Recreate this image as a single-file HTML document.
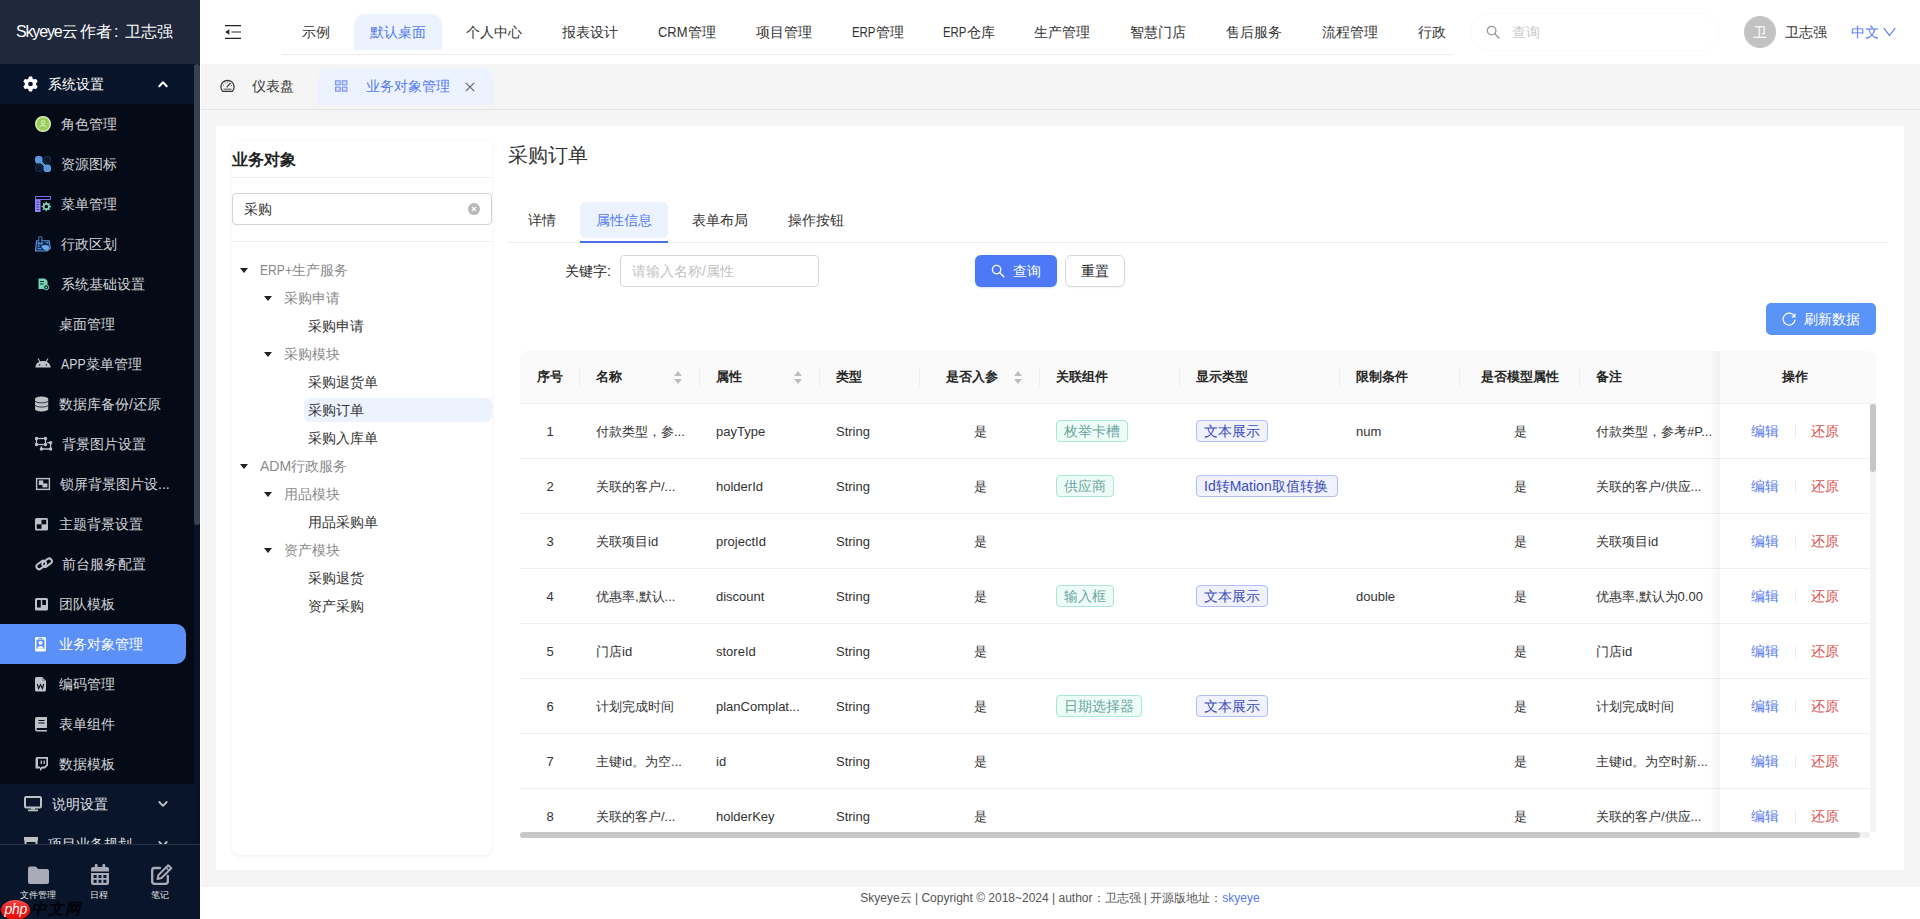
<!DOCTYPE html>
<html lang="zh">
<head>
<meta charset="utf-8">
<title>Skyeye</title>
<style>
*{box-sizing:border-box;margin:0;padding:0}
html,body{width:1920px;height:919px;overflow:hidden;background:#f5f5f5;font-family:"Liberation Sans",sans-serif;font-size:14px;color:#333}
.a{position:absolute}
.t{position:absolute;white-space:nowrap;line-height:20px;height:20px}
svg{position:absolute;display:block}
/* sidebar */
#side{left:0;top:0;width:200px;height:919px;background:#050a17;overflow:hidden}
#logo{left:0;top:0;width:200px;height:64px;background:#20293c}
#logo .t{left:16px;top:21px;font-size:16px;color:#fff;line-height:22px;height:22px}
#grp1{left:0;top:64px;width:194px;height:40px;background:#07142a}
.mi{position:absolute;left:0;width:194px;height:40px}
.mi .t{top:10px;color:#d2d4d8;font-size:14px}
.mi svg{top:12px;left:35px;width:16px;height:16px}
#act{left:0;top:624px;width:186px;height:40px;background:#5c90f9;border-radius:0 10px 10px 0}
#grp2{left:0;top:784px;width:200px;height:61px;background:#08152a}
#sbar{left:0;top:844px;width:200px;height:75px;background:#08152a;border-top:1px solid #2a3447}
#sbar .t{font-size:9.200px;color:#e6e6e6;line-height:12px;height:12px;top:44px}
/* header */
#hdr{left:200px;top:0;width:1720px;height:64px;background:#fff}
.nv{position:absolute;top:22px;font-size:14px;line-height:20px;color:#333;white-space:nowrap}
#tabs{left:200px;top:64px;width:1720px;height:46px;background:#f5f5f5;border-bottom:1px solid #e4e4e4}
#card{left:216px;top:126px;width:1688px;height:744px;background:#fff}
#foot{left:200px;top:887px;width:1720px;height:32px;background:#fff}
</style>
</head>
<body>
<!-- ============ SIDEBAR ============ -->
<div id="side" class="a">
  <div id="logo" class="a"><div class="t"><span style="letter-spacing:-1.150px">Skyeye</span><span>云</span><span style="margin-left:2.500px">作者</span><span style="display:inline-block;width:13px;padding-left:2px">:</span>卫志强</div></div>
  <div id="grp1" class="a"></div>
  <!-- group 1 header -->
  <svg style="left:23px;top:76px;width:15px;height:16px" viewBox="0 0 512 512"><path fill="#fff" d="M495.9 166.600c3.200 8.700 .500 18.400-6.400 24.600l-43.300 39.400c1.100 8.300 1.700 16.800 1.700 25.400s-.600 17.100-1.700 25.400l43.300 39.400c6.900 6.200 9.600 15.900 6.400 24.600c-4.400 11.900-9.700 23.300-15.800 34.300l-4.700 8.100c-6.600 11-14 21.400-22.100 31.200c-5.900 7.200-15.700 9.600-24.500 6.800l-55.700-17.700c-13.400 10.300-28.200 18.900-44 25.400l-12.500 57.100c-2 9.100-9 16.300-18.200 17.800c-13.800 2.300-28 3.500-42.500 3.500s-28.700-1.200-42.500-3.500c-9.200-1.500-16.200-8.700-18.200-17.800l-12.500-57.100c-15.800-6.500-30.600-15.100-44-25.400L83.100 425.900c-8.800 2.800-18.600 .300-24.500-6.800c-8.100-9.800-15.500-20.200-22.100-31.200l-4.700-8.100c-6.100-11-11.400-22.400-15.800-34.300c-3.200-8.700-.500-18.400 6.400-24.600l43.300-39.400C64.600 273.100 64 264.600 64 256s.600-17.100 1.700-25.400L22.400 191.200c-6.900-6.200-9.600-15.900-6.400-24.600c4.400-11.900 9.700-23.300 15.800-34.300l4.700-8.100c6.600-11 14-21.400 22.100-31.200c5.900-7.200 15.700-9.600 24.500-6.800l55.700 17.700c13.400-10.300 28.200-18.900 44-25.400l12.500-57.100c2-9.100 9-16.300 18.200-17.800C227.300 1.200 241.500 0 256 0s28.700 1.200 42.500 3.500c9.200 1.500 16.200 8.700 18.200 17.800l12.500 57.100c15.800 6.500 30.600 15.100 44 25.400l55.700-17.700c8.800-2.800 18.600-.300 24.500 6.800c8.100 9.800 15.500 20.200 22.100 31.200l4.700 8.100c6.100 11 11.400 22.400 15.800 34.300zM256 336a80 80 0 1 0 0-160 80 80 0 1 0 0 160z"/></svg>
  <div class="t" style="left:48px;top:74px;color:#fff;font-size:14px">系统设置</div>
  <svg style="left:158px;top:80px;width:10px;height:8px" viewBox="0 0 10 8"><path d="M1.300 6.200 L5 2.300 L8.700 6.200" fill="none" stroke="#fff" stroke-width="2" stroke-linecap="round" stroke-linejoin="round"/></svg>

  <div id="act" class="a"></div>

  <!-- 角色管理 -->
  <div class="mi" style="top:104px">
    <svg viewBox="0 0 16 16"><circle cx="8" cy="8" r="7.300" fill="#9ccc5a" stroke="#dcf0bd" stroke-width="1.400"/><circle cx="8" cy="6.300" r="1.700" fill="none" stroke="#e8f7cf" stroke-width="0.900"/><path d="M4.500 11.300 C5 8.800 11 8.800 11.500 11.300" fill="none" stroke="#e8f7cf" stroke-width="0.900"/></svg>
    <div class="t" style="left:61px">角色管理</div></div>
  <!-- 资源图标 -->
  <div class="mi" style="top:144px">
    <svg viewBox="0 0 16 16"><rect x="0" y="0" width="7.500" height="7.500" rx="2.800" fill="#5a98de"/><rect x="8.500" y="8.500" width="7.500" height="7.500" rx="2.800" fill="#5a98de"/><rect x="9" y="0.500" width="6.500" height="6.500" rx="1.800" fill="#0c1830" stroke="#1d2c4a" stroke-width="1"/><rect x="0.500" y="9" width="6.500" height="6.500" rx="1.800" fill="#0c1830" stroke="#1d2c4a" stroke-width="1"/><path d="M5 5 L11 11" stroke="#5a98de" stroke-width="2.200"/></svg>
    <div class="t" style="left:61px">资源图标</div></div>
  <!-- 菜单管理 -->
  <div class="mi" style="top:184px">
    <svg viewBox="0 0 16 16"><path d="M0.500 0.500 H15.500 V3.500 H0.500 Z" fill="none" stroke="#7b6cf0" stroke-width="1"/><rect x="0" y="3.500" width="5.500" height="12.500" fill="#8f86f5"/><path d="M1.500 6 H4 M1.500 8.500 H4 M1.500 11 H4 M1.500 13.500 H4" stroke="#4338a8" stroke-width="1"/><circle cx="11.300" cy="10.500" r="2.700" fill="none" stroke="#86dcbc" stroke-width="1.700"/><path d="M11.300 5.700 V7 M11.300 14 V15.300 M6.500 10.500 H7.800 M14.800 10.500 H16 M8 7.200 L8.900 8.100 M13.700 12.900 L14.600 13.800 M8 13.800 L8.900 12.900 M13.700 8.100 L14.600 7.200" stroke="#86dcbc" stroke-width="1.300"/></svg>
    <div class="t" style="left:61px">菜单管理</div></div>
  <!-- 行政区划 -->
  <div class="mi" style="top:224px">
    <svg viewBox="0 0 17 17" preserveAspectRatio="none" style="width:16.500px;height:16px;top:11.800px"><path d="M1.600 5 H14.600 L15.800 13 L12.300 16 H0.600 Z" fill="#12284a" stroke="#5d97e0" stroke-width="1.200" stroke-linejoin="round"/><path d="M2.800 6.500 H8 V9 H2.800 Z M10 6.300 L13.500 6.300 L14 9 Z M2.500 12.700 H7 V14 H2.500 Z" fill="#4d86d2"/><circle cx="3.900" cy="10.800" r="1.100" fill="#4d86d2"/><path d="M6.300 11 Q10 8.300 14.200 10.600 L14.700 13 L12 15.700 L9 14.300 Z" fill="#6fa9f0"/><path d="M8.500 6 L14.500 10" stroke="#12284a" stroke-width="0.800"/><circle cx="5.500" cy="2.600" r="2" fill="#0b1930" stroke="#4a80c8" stroke-width="1"/><path d="M5.500 2 V6.500" stroke="#0b1930" stroke-width="1.300"/><path d="M4.700 4.300 H6.300 V7.200 H4.700 Z" fill="#0b1930"/></svg>
    <div class="t" style="left:61px">行政区划</div></div>
  <!-- 系统基础设置 -->
  <div class="mi" style="top:264px">
    <svg viewBox="0 0 16 16"><path d="M3.500 2.500 H10 L12.500 5 V13 H3.500 Z" fill="#7ad5b7"/><path d="M5 5.500 H9 M5 8 H8.500" stroke="#0c2a24" stroke-width="1.200"/><circle cx="11.200" cy="11.300" r="2.500" fill="#0c2a24" stroke="#7ad5b7" stroke-width="1"/><circle cx="11.200" cy="11.300" r="0.900" fill="#7ad5b7"/></svg>
    <div class="t" style="left:61px">系统基础设置</div></div>
  <!-- 桌面管理 -->
  <div class="mi" style="top:304px"><div class="t" style="left:59px">桌面管理</div></div>
  <!-- APP菜单管理 : android -->
  <div class="mi" style="top:344px">
    <svg viewBox="0 0 16 16" style="top:11px"><path d="M0.300 12.500 C0.600 8.600 3.800 6 8 6 C12.200 6 15.400 8.600 15.700 12.500 Z" fill="#bec1c8"/><path d="M3.300 4 L5 7 M12.700 4 L11 7" stroke="#bec1c8" stroke-width="1.100" stroke-linecap="round"/><circle cx="4.600" cy="10" r="0.800" fill="#050a17"/><circle cx="11.400" cy="10" r="0.800" fill="#050a17"/></svg>
    <div class="t" style="left:61px"><span style="display:inline-block;transform:scaleX(0.879);transform-origin:0 50%;margin-right:-3.4px">APP</span>菜单管理</div></div>
  <!-- 数据库备份/还原 -->
  <div class="mi" style="top:384px">
    <svg viewBox="0 0 14 16" style="width:14px"><path d="M0 3.300 C0 -0.300 13.200 -0.300 13.200 3.300 V12.700 C13.200 16.300 0 16.300 0 12.700 Z" fill="#bec1c8"/><path d="M0 5.200 C2 7.400 11.200 7.400 13.200 5.200 M0 9.400 C2 11.600 11.200 11.600 13.200 9.400" fill="none" stroke="#1a2030" stroke-width="0.900"/></svg>
    <div class="t" style="left:59px">数据库备份/还原</div></div>
  <!-- 背景图片设置 : object-ungroup -->
  <div class="mi" style="top:424px">
    <svg viewBox="0 0 18 16" style="width:18px"><g fill="none" stroke="#bec1c8" stroke-width="1.300"><rect x="1.500" y="2.500" width="9" height="6"/><path d="M12.300 6.700 H15.600 V13 H6.400 V10.300"/></g><g fill="#bec1c8"><circle cx="1.600" cy="2.500" r="1.700"/><circle cx="10.500" cy="2.500" r="1.700"/><circle cx="1.600" cy="8.500" r="1.700"/><circle cx="10.500" cy="8.500" r="1.700"/><circle cx="15.600" cy="6.700" r="1.700"/><circle cx="15.600" cy="13" r="1.700"/><circle cx="6.400" cy="13" r="1.700"/></g></svg>
    <div class="t" style="left:62px">背景图片设置</div></div>
  <!-- 锁屏背景图片设 : image -->
  <div class="mi" style="top:464px">
    <svg viewBox="0 0 16 16"><rect x="1.600" y="2.600" width="12.800" height="10.800" fill="none" stroke="#bec1c8" stroke-width="1.400"/><rect x="3.800" y="4.400" width="4.400" height="4.600" fill="#bec1c8"/><rect x="7.400" y="7.400" width="5" height="4" fill="#bec1c8"/></svg>
    <div class="t" style="left:60px">锁屏背景图片设...</div></div>
  <!-- 主题背景设置 : chess board -->
  <div class="mi" style="top:504px">
    <svg viewBox="0 0 14 16" style="width:14px"><rect x="0" y="2" width="13" height="12.500" rx="1.500" fill="#bec1c8"/><rect x="6.500" y="3.800" width="4.800" height="4.500" fill="#050a17"/><rect x="1.700" y="8.300" width="4.800" height="4.500" fill="#050a17"/></svg>
    <div class="t" style="left:59px">主题背景设置</div></div>
  <!-- 前台服务配置 : link -->
  <div class="mi" style="top:544px">
    <svg viewBox="0 0 18 16" style="width:18px"><g fill="none" stroke="#bec1c8" stroke-width="2"><rect x="-5.200" y="-2.700" width="10.400" height="5.400" rx="2.700" transform="translate(6.200 9) rotate(-36)"/><rect x="-5.200" y="-2.700" width="10.400" height="5.400" rx="2.700" transform="translate(12.100 6.700) rotate(-36)"/></g></svg>
    <div class="t" style="left:62px">前台服务配置</div></div>
  <!-- 团队模板 : trello -->
  <div class="mi" style="top:584px">
    <svg viewBox="0 0 14 16" style="width:14px"><rect x="0" y="2" width="13" height="12.500" rx="1.500" fill="#bec1c8"/><rect x="2" y="4" width="3.800" height="7.500" rx="0.500" fill="#050a17"/><rect x="7.200" y="4" width="3.800" height="5" rx="0.500" fill="#050a17"/></svg>
    <div class="t" style="left:59px">团队模板</div></div>
  <!-- 业务对象管理 : id badge (active) -->
  <div class="mi" style="top:624px">
    <svg viewBox="0 0 12 16" style="width:12px"><rect x="0" y="1" width="11" height="14.500" rx="1.500" fill="#fff"/><rect x="1.500" y="3.500" width="8" height="10.500" fill="#5c90f9"/><rect x="3.500" y="1.800" width="4" height="1" fill="#5c90f9"/><circle cx="5.500" cy="6.800" r="1.900" fill="#fff"/><path d="M2.500 12.500 C2.500 9 8.500 9 8.500 12.500 Z" fill="#fff"/><rect x="1.500" y="12.500" width="8" height="1.500" fill="#fff"/></svg>
    <div class="t" style="left:59px;color:#fff">业务对象管理</div></div>
  <!-- 编码管理 : file word -->
  <div class="mi" style="top:664px">
    <svg viewBox="0 0 12 16" style="width:12px"><path d="M0 2.500 Q0 1 1.500 1 H7 L11 5 V14 Q11 15.500 9.500 15.500 H1.500 Q0 15.500 0 14 Z" fill="#bec1c8"/><path d="M7 1 V5 H11" fill="#8e939c"/><path d="M2.300 8 L3.600 12.500 L5.500 8.800 L7.400 12.500 L8.700 8" fill="none" stroke="#050a17" stroke-width="1.100"/></svg>
    <div class="t" style="left:59px">编码管理</div></div>
  <!-- 表单组件 : book -->
  <div class="mi" style="top:704px">
    <svg viewBox="0 0 13 16" style="width:13px"><path d="M0 3 Q0 1 2 1 H12 V12 H2.500 Q1.500 12 1.500 13 Q1.500 14 2.500 14 H12 V15.500 H2 Q0 15.500 0 13.500 Z" fill="#bec1c8"/><path d="M3.500 4.500 H9.500 M3.500 7 H9.500" stroke="#050a17" stroke-width="1.100"/></svg>
    <div class="t" style="left:59px">表单组件</div></div>
  <!-- 数据模板 : twitch -->
  <div class="mi" style="top:744px">
    <svg viewBox="0 0 14 16" style="width:14px"><path d="M1.500 1 H13 V9.500 L10 12.500 H7.500 L5 15 V12.500 H0.500 V3 Z" fill="#bec1c8"/><path d="M3 2.800 H11.300 V8.800 L9.500 10.500 H6.800 L5 12 V10.500 H3 Z" fill="#050a17"/><path d="M6.300 4.500 V8 M9.200 4.500 V8" stroke="#bec1c8" stroke-width="1.300"/></svg>
    <div class="t" style="left:59px">数据模板</div></div>

  <!-- group 2 -->
  <div id="grp2" class="a"></div>
  <svg style="left:24px;top:796px;width:18px;height:16px" viewBox="0 0 18 16"><rect x="1" y="1" width="16" height="10.500" rx="1.200" fill="none" stroke="#bec1c8" stroke-width="2"/><rect x="4" y="13.500" width="10" height="1.800" rx="0.500" fill="#bec1c8"/><rect x="7" y="11.500" width="4" height="2" fill="#bec1c8"/></svg>
  <div class="t" style="left:52px;top:794px;color:#e0e2e6">说明设置</div>
  <svg style="left:158px;top:800px;width:10px;height:8px" viewBox="0 0 10 8"><path d="M1.300 2 L5 5.800 L8.700 2" fill="none" stroke="#bec1c8" stroke-width="1.800" stroke-linecap="round" stroke-linejoin="round"/></svg>
  <svg style="left:24px;top:837px;width:14px;height:16px" viewBox="0 0 14 16"><rect x="0" y="0" width="14" height="3.500" fill="#bec1c8"/><rect x="1.500" y="4" width="11" height="9" fill="none" stroke="#bec1c8" stroke-width="2"/></svg>
  <div class="t" style="left:48px;top:834px;color:#e0e2e6">项目业务规划</div>
  <svg style="left:158px;top:840px;width:10px;height:8px" viewBox="0 0 10 8"><path d="M1.300 2 L5 5.800 L8.700 2" fill="none" stroke="#bec1c8" stroke-width="1.800" stroke-linecap="round" stroke-linejoin="round"/></svg>

  <!-- scrollbar -->
  <div class="a" style="left:194px;top:64px;width:6px;height:780px;background:#081327"></div>
  <div class="a" style="left:194px;top:64px;width:6px;height:461px;background:#374152;border-radius:3px"></div>

  <!-- bottom bar -->
  <div id="sbar" class="a">
    <svg style="left:28px;top:21px;width:21px;height:18px" viewBox="0 0 21 18"><path d="M0 2.500 Q0 0.500 2 0.500 H7 Q8 0.500 8.800 1.500 L10 3 H19 Q21 3 21 5 V16 Q21 18 19 18 H2 Q0 18 0 16 Z" fill="#a9acb8"/></svg>
    <svg style="left:91px;top:19px;width:18px;height:21px" viewBox="0 0 18 21"><path d="M0 5 Q0 3 2 3 H16 Q18 3 18 5 V7.500 H0 Z" fill="#a9acb8"/><rect x="3.800" y="0" width="2.800" height="5" rx="1" fill="#a9acb8"/><rect x="11.400" y="0" width="2.800" height="5" rx="1" fill="#a9acb8"/><path d="M0 9 H18 V19 Q18 21 16 21 H2 Q0 21 0 19 Z" fill="#a9acb8"/><g fill="#08152a"><rect x="2.600" y="11" width="3" height="3"/><rect x="7.500" y="11" width="3" height="3"/><rect x="12.400" y="11" width="3" height="3"/><rect x="2.600" y="15.800" width="3" height="3"/><rect x="7.500" y="15.800" width="3" height="3"/><rect x="12.400" y="15.800" width="3" height="3"/></g></svg>
    <svg style="left:151px;top:19px;width:22px;height:21px" viewBox="0 0 22 21"><path d="M9 4 H3.500 Q1.200 4 1.200 6.300 V17.500 Q1.200 19.800 3.500 19.800 H14.500 Q16.800 19.800 16.800 17.500 V12" fill="none" stroke="#a9acb8" stroke-width="2.300" stroke-linecap="round"/><path d="M17.200 1.200 L20.300 4.300 L10.500 14 L6.500 15 L7.500 11 Z" fill="none" stroke="#a9acb8" stroke-width="2" stroke-linejoin="round"/><path d="M15 3.500 L18 6.500" stroke="#a9acb8" stroke-width="1.500"/></svg>
    <div class="t" style="left:20px">文件管理</div>
    <div class="t" style="left:90px">日程</div>
    <div class="t" style="left:151px">笔记</div>
  </div>

  <!-- watermark -->
  <div class="a" style="left:1px;top:900px;width:29px;height:20px;border-radius:50%;background:linear-gradient(#f45252,#f01414 45%,#ee0d0d)"></div>
  <div class="t" style="left:4.500px;top:900px;font-size:14px;font-style:italic;font-weight:normal;color:#fff;letter-spacing:-0.300px;line-height:18px;height:18px">php</div>
  <div class="t" style="left:31px;top:900px;font-size:15.500px;letter-spacing:0.800px;font-style:italic;color:#020308;line-height:18px;height:18px;font-weight:bold">中文网</div>
</div>
<!-- ============ HEADER ============ -->
<div id="hdr" class="a">
  <!-- coords relative to #hdr (left:200) -->
  <svg style="left:25px;top:25px;width:17px;height:14px" viewBox="0 0 17 14"><path d="M0 0.700 H16 M6.500 7 H16 M0 13.300 H16" stroke="#222" stroke-width="1.200" fill="none"/><path d="M4.300 4.200 L0.200 7 L4.300 9.800 Z" fill="#222"/></svg>
  <div class="a" style="left:154px;top:14px;width:88px;height:36px;background:#ecf3ff;border-radius:10px 10px 0 0"></div>
  <div class="a" style="left:82px;top:54px;width:1171px;height:1px;background:#ececec"></div>
  <div class="nv" style="left:102px">示例</div>
  <div class="nv" style="left:170px;color:#557af0">默认桌面</div>
  <div class="nv" style="left:266px">个人中心</div>
  <div class="nv" style="left:362px">报表设计</div>
  <div class="nv" style="left:458px"><span style="display:inline-block;transform:scaleX(0.925);transform-origin:0 50%;margin-right:-2.4px">CRM</span>管理</div>
  <div class="nv" style="left:556px">项目管理</div>
  <div class="nv" style="left:652px"><span style="display:inline-block;transform:scaleX(0.816);transform-origin:0 50%;margin-right:-5.3px">ERP</span>管理</div>
  <div class="nv" style="left:743px"><span style="display:inline-block;transform:scaleX(0.816);transform-origin:0 50%;margin-right:-5.3px">ERP</span>仓库</div>
  <div class="nv" style="left:834px">生产管理</div>
  <div class="nv" style="left:930px">智慧门店</div>
  <div class="nv" style="left:1026px">售后服务</div>
  <div class="nv" style="left:1122px">流程管理</div>
  <div class="nv" style="left:1218px">行政</div>
  <svg style="left:1286px;top:25px;width:14px;height:14px" viewBox="0 0 14 14"><circle cx="5.600" cy="5.600" r="4.300" fill="none" stroke="#999" stroke-width="1.300"/><path d="M8.800 8.800 L13 13" stroke="#999" stroke-width="1.400" stroke-linecap="round"/></svg>
  <div class="nv" style="left:1312px;color:#c8c8c8">查询</div>
  <div class="a" style="left:1270px;top:13px;width:249px;height:38px;border:1px solid #fbfbfb;border-radius:19px"></div>
  <div class="a" style="left:1544px;top:16px;width:32px;height:32px;border-radius:50%;background:#c2c2c2"></div>
  <div class="nv" style="left:1553px;color:#fff">卫</div>
  <div class="nv" style="left:1585px">卫志强</div>
  <div class="nv" style="left:1651px;color:#557af0">中文</div>
  <svg style="left:1683px;top:27px;width:13px;height:10px" viewBox="0 0 13 10"><path d="M0.800 1 L6.500 8.500 L12.200 1" fill="none" stroke="#557af0" stroke-width="1.200"/></svg>
</div>
<div id="tabs" class="a">
  <!-- coords relative to #tabs (left:200, top:64) -->
  <svg style="left:19.500px;top:14.700px;width:15px;height:13px" viewBox="0 0 15 13"><path d="M2.600 12.300 A6.600 6.600 0 1 1 12.400 12.300 Z" fill="none" stroke="#333" stroke-width="1.250" stroke-linejoin="round"/><path d="M7 7.800 L10.200 4.300" stroke="#333" stroke-width="1.200" stroke-linecap="round"/><path d="M3 6 L3.900 6.500 M5 3.500 L5.500 4.300 M7.500 2.500 V3.500 M12 6 L11.200 6.500" stroke="#333" stroke-width="0.900"/><path d="M3.500 10.200 H11.500" stroke="#333" stroke-width="0.900"/></svg>
  <div class="t" style="left:52px;top:12px;color:#333">仪表盘</div>
  <div class="a" style="left:118px;top:5px;width:176px;height:36px;background:#ecf3ff;border-radius:10px 10px 0 0"></div>
  <svg style="left:135px;top:16px;width:12.500px;height:12px" viewBox="0 0 13 12"><g fill="#d3dcfb" stroke="#7590f2" stroke-width="1.100"><rect x="0.600" y="0.600" width="4.800" height="4.200"/><rect x="7.600" y="0.600" width="4.800" height="4.200"/><rect x="0.600" y="7.200" width="4.800" height="4.200"/><rect x="7.600" y="7.200" width="4.800" height="4.200"/></g></svg>
  <div class="t" style="left:166px;top:12px;color:#557af0">业务对象管理</div>
  <svg style="left:265px;top:18px;width:10px;height:10px" viewBox="0 0 10 10"><path d="M0.800 0.800 L9.200 9.200 M9.200 0.800 L0.800 9.200" stroke="#666" stroke-width="1.200"/></svg>
</div>
<div id="card" class="a">
  <!-- coords relative to #card (left:216, top:126) -->
  <style>
  #lp{left:16px;top:15px;width:260px;height:714px;background:#fff;border-radius:8px;box-shadow:0 1px 4px rgba(0,0,0,.07)}
  .tr{position:absolute;white-space:nowrap;line-height:20px;height:20px;font-size:14px;color:#8a8a8a}
  .tr.lf{color:#333}
  .ar{position:absolute;width:0;height:0;border-left:4px solid transparent;border-right:4px solid transparent;border-top:5px solid #222}
  </style>
  <div id="lp" class="a">
    <!-- relative to lp: abs x-232, y-141 -->
    <div class="t" style="left:0;top:8px;font-size:16px;font-weight:bold;color:#222;line-height:22px;height:22px">业务对象</div>
    <div class="a" style="left:0;top:36px;width:260px;height:1px;background:#eee"></div>
    <div class="a" style="left:0;top:52px;width:260px;height:32px;border:1px solid #d2d2d2;border-radius:4px;background:#fff"></div>
    <div class="t" style="left:12px;top:58px;color:#333">采购</div>
    <svg style="left:236px;top:62px;width:12px;height:12px" viewBox="0 0 12 12"><circle cx="6" cy="6" r="6" fill="#b8b8b8"/><path d="M4 4 L8 8 M8 4 L4 8" stroke="#fff" stroke-width="1.200"/></svg>
    <div class="a" style="left:0;top:100px;width:260px;height:1px;background:#eee"></div>

    <div class="a" style="left:72px;top:257px;width:188px;height:24px;background:#ecf3ff;border-radius:6px"></div>

    <div class="ar" style="left:8px;top:127px"></div><div class="tr" style="left:28px;top:119px"><span style="display:inline-block;transform:scaleX(0.865);transform-origin:0 50%;margin-right:-5.0px">ERP+</span>生产服务</div>
    <div class="ar" style="left:32px;top:155px"></div><div class="tr" style="left:52px;top:147px">采购申请</div>
    <div class="tr lf" style="left:76px;top:175px">采购申请</div>
    <div class="ar" style="left:32px;top:211px"></div><div class="tr" style="left:52px;top:203px">采购模块</div>
    <div class="tr lf" style="left:76px;top:231px">采购退货单</div>
    <div class="tr lf" style="left:76px;top:259px">采购订单</div>
    <div class="tr lf" style="left:76px;top:287px">采购入库单</div>
    <div class="ar" style="left:8px;top:323px"></div><div class="tr" style="left:28px;top:315px">ADM行政服务</div>
    <div class="ar" style="left:32px;top:351px"></div><div class="tr" style="left:52px;top:343px">用品模块</div>
    <div class="tr lf" style="left:76px;top:371px">用品采购单</div>
    <div class="ar" style="left:32px;top:407px"></div><div class="tr" style="left:52px;top:399px">资产模块</div>
    <div class="tr lf" style="left:76px;top:427px">采购退货</div>
    <div class="tr lf" style="left:76px;top:455px">资产采购</div>
  </div>
<!--C2S-->
  <style>
  .rt{position:absolute;white-space:nowrap;line-height:20px;height:20px;font-size:14px;color:#333}
  .th{position:absolute;white-space:nowrap;line-height:20px;height:20px;font-size:13px;font-weight:bold;color:#262626;top:241px}
  .td{position:absolute;white-space:nowrap;line-height:20px;height:20px;font-size:13px;color:#333}
  .tg{position:absolute;white-space:nowrap;line-height:20px;height:22px;font-size:14px;padding:0 7px;border:1px solid;border-radius:4px}
  .tg.g{color:#6ba6a0;background:#eefcf8;border-color:#a9e8d9}
  .tg.b{color:#3b4cbd;background:#f0f2ff;border-color:#b3bdf7}
  .sep{position:absolute;top:241px;width:1px;height:20px;background:#f0f0f0}
  .rl{position:absolute;left:304px;width:1350px;height:1px;background:#f0f0f0}
  .so{position:absolute;top:245px;width:8px;height:13px}
  .so:before,.so:after{content:"";position:absolute;left:0;border-left:4px solid transparent;border-right:4px solid transparent}
  .so:before{top:0;border-bottom:5px solid #bfbfbf}
  .so:after{top:8px;border-top:5px solid #bfbfbf}
  </style>
  <div class="rt" style="left:292px;top:15px;font-size:20px;line-height:28px;height:28px">采购订单</div>
  <div class="a" style="left:364px;top:76px;width:88px;height:36px;background:#ecf3ff;border-radius:5px"></div>
  <div class="a" style="left:292px;top:116px;width:1380px;height:1px;background:#ececec"></div>
  <div class="a" style="left:364px;top:115px;width:88px;height:2px;background:#4a70ea"></div>
  <div class="rt" style="left:312px;top:84px;color:#333">详情</div>
  <div class="rt" style="left:380px;top:84px;color:#557af0">属性信息</div>
  <div class="rt" style="left:476px;top:84px;color:#333">表单布局</div>
  <div class="rt" style="left:572px;top:84px;color:#333">操作按钮</div>
  <div class="rt" style="left:349px;top:135px;color:#262626">关键字:</div>
  <div class="a" style="left:404px;top:129px;width:199px;height:32px;border:1px solid #d6d6d6;border-radius:4px"></div>
  <div class="rt" style="left:416px;top:135px;color:#c4c4c4">请输入名称/属性</div>
  <div class="a" style="left:759px;top:129px;width:82px;height:32px;background:#4d79f6;border-radius:6px;box-shadow:0 1px 2px rgba(77,121,246,.25)"></div>
  <svg style="left:775px;top:138px;width:14px;height:14px" viewBox="0 0 14 14"><circle cx="5.600" cy="5.600" r="4.200" fill="none" stroke="#fff" stroke-width="1.350"/><path d="M8.800 8.800 L12.800 12.800" stroke="#fff" stroke-width="1.450" stroke-linecap="round"/></svg>
  <div class="rt" style="left:797px;top:135px;color:#fff">查询</div>
  <div class="a" style="left:849px;top:129px;width:60px;height:32px;border:1px solid #d9d9d9;border-radius:6px;background:#fff;box-shadow:0 1px 2px rgba(0,0,0,.04)"></div>
  <div class="rt" style="left:865px;top:135px;color:#262626">重置</div>
  <div class="a" style="left:1550px;top:177px;width:110px;height:32px;background:#5b94f8;border-radius:5px"></div>
  <svg style="left:1566px;top:186px;width:14px;height:14px" viewBox="0 0 14 14"><path d="M12.300 4.200 A6 6 0 1 0 13 8.200" fill="none" stroke="#fff" stroke-width="1.200" stroke-linecap="round"/><path d="M12.900 1.600 V4.800 H9.700" fill="none" stroke="#fff" stroke-width="1.200"/></svg>
  <div class="rt" style="left:1588px;top:183px;color:#fff">刷新数据</div>
  <div class="a" style="left:304px;top:225px;width:1356px;height:53px;background:#fafafa;border-bottom:1px solid #f0f0f0;border-radius:8px 8px 0 0"></div>
  <div class="th" style="left:321px">序号</div>
  <div class="th" style="left:380px">名称</div>
  <div class="th" style="left:500px">属性</div>
  <div class="th" style="left:620px">类型</div>
  <div class="th" style="left:730px">是否入参</div>
  <div class="th" style="left:840px">关联组件</div>
  <div class="th" style="left:980px">显示类型</div>
  <div class="th" style="left:1140px">限制条件</div>
  <div class="th" style="left:1265px">是否模型属性</div>
  <div class="th" style="left:1380px">备注</div>
  <div class="sep" style="left:363px"></div>
  <div class="sep" style="left:483px"></div>
  <div class="sep" style="left:603px"></div>
  <div class="sep" style="left:703px"></div>
  <div class="sep" style="left:823px"></div>
  <div class="sep" style="left:963px"></div>
  <div class="sep" style="left:1123px"></div>
  <div class="sep" style="left:1243px"></div>
  <div class="sep" style="left:1363px"></div>
  <div class="so" style="left:458px"></div>
  <div class="so" style="left:578px"></div>
  <div class="so" style="left:798px"></div>
  <!-- row 1 -->
  <div class="td" style="left:304px;width:60px;text-align:center;top:296px">1</div>
  <div class="td" style="left:380px;top:296px">付款类型，参...</div>
  <div class="td" style="left:500px;top:296px">payType</div>
  <div class="td" style="left:620px;top:296px">String</div>
  <div class="td" style="left:704px;width:120px;text-align:center;top:296px">是</div>
  <div class="tg g" style="left:840px;top:294px">枚举卡槽</div>
  <div class="tg b" style="left:980px;top:294px">文本展示</div>
  <div class="td" style="left:1140px;top:296px">num</div>
  <div class="td" style="left:1244px;width:120px;text-align:center;top:296px">是</div>
  <div class="td" style="left:1380px;top:296px">付款类型，参考#P...</div>
  <div class="rl" style="top:332px"></div>
  <!-- row 2 -->
  <div class="td" style="left:304px;width:60px;text-align:center;top:351px">2</div>
  <div class="td" style="left:380px;top:351px">关联的客户/...</div>
  <div class="td" style="left:500px;top:351px">holderId</div>
  <div class="td" style="left:620px;top:351px">String</div>
  <div class="td" style="left:704px;width:120px;text-align:center;top:351px">是</div>
  <div class="tg g" style="left:840px;top:349px">供应商</div>
  <div class="tg b" style="left:980px;top:349px;width:142px">Id转Mation取值转换</div>
  <div class="td" style="left:1244px;width:120px;text-align:center;top:351px">是</div>
  <div class="td" style="left:1380px;top:351px">关联的客户/供应...</div>
  <div class="rl" style="top:387px"></div>
  <!-- row 3 -->
  <div class="td" style="left:304px;width:60px;text-align:center;top:406px">3</div>
  <div class="td" style="left:380px;top:406px">关联项目id</div>
  <div class="td" style="left:500px;top:406px">projectId</div>
  <div class="td" style="left:620px;top:406px">String</div>
  <div class="td" style="left:704px;width:120px;text-align:center;top:406px">是</div>
  <div class="td" style="left:1244px;width:120px;text-align:center;top:406px">是</div>
  <div class="td" style="left:1380px;top:406px">关联项目id</div>
  <div class="rl" style="top:442px"></div>
  <!-- row 4 -->
  <div class="td" style="left:304px;width:60px;text-align:center;top:461px">4</div>
  <div class="td" style="left:380px;top:461px">优惠率,默认...</div>
  <div class="td" style="left:500px;top:461px">discount</div>
  <div class="td" style="left:620px;top:461px">String</div>
  <div class="td" style="left:704px;width:120px;text-align:center;top:461px">是</div>
  <div class="tg g" style="left:840px;top:459px">输入框</div>
  <div class="tg b" style="left:980px;top:459px">文本展示</div>
  <div class="td" style="left:1140px;top:461px">double</div>
  <div class="td" style="left:1244px;width:120px;text-align:center;top:461px">是</div>
  <div class="td" style="left:1380px;top:461px">优惠率,默认为0.00</div>
  <div class="rl" style="top:497px"></div>
  <!-- row 5 -->
  <div class="td" style="left:304px;width:60px;text-align:center;top:516px">5</div>
  <div class="td" style="left:380px;top:516px">门店id</div>
  <div class="td" style="left:500px;top:516px">storeId</div>
  <div class="td" style="left:620px;top:516px">String</div>
  <div class="td" style="left:704px;width:120px;text-align:center;top:516px">是</div>
  <div class="td" style="left:1244px;width:120px;text-align:center;top:516px">是</div>
  <div class="td" style="left:1380px;top:516px">门店id</div>
  <div class="rl" style="top:552px"></div>
  <!-- row 6 -->
  <div class="td" style="left:304px;width:60px;text-align:center;top:571px">6</div>
  <div class="td" style="left:380px;top:571px">计划完成时间</div>
  <div class="td" style="left:500px;top:571px">planComplat...</div>
  <div class="td" style="left:620px;top:571px">String</div>
  <div class="td" style="left:704px;width:120px;text-align:center;top:571px">是</div>
  <div class="tg g" style="left:840px;top:569px">日期选择器</div>
  <div class="tg b" style="left:980px;top:569px">文本展示</div>
  <div class="td" style="left:1244px;width:120px;text-align:center;top:571px">是</div>
  <div class="td" style="left:1380px;top:571px">计划完成时间</div>
  <div class="rl" style="top:607px"></div>
  <!-- row 7 -->
  <div class="td" style="left:304px;width:60px;text-align:center;top:626px">7</div>
  <div class="td" style="left:380px;top:626px">主键id。为空...</div>
  <div class="td" style="left:500px;top:626px">id</div>
  <div class="td" style="left:620px;top:626px">String</div>
  <div class="td" style="left:704px;width:120px;text-align:center;top:626px">是</div>
  <div class="td" style="left:1244px;width:120px;text-align:center;top:626px">是</div>
  <div class="td" style="left:1380px;top:626px">主键id。为空时新...</div>
  <div class="rl" style="top:662px"></div>
  <!-- row 8 -->
  <div class="td" style="left:304px;width:60px;text-align:center;top:681px">8</div>
  <div class="td" style="left:380px;top:681px">关联的客户/...</div>
  <div class="td" style="left:500px;top:681px">holderKey</div>
  <div class="td" style="left:620px;top:681px">String</div>
  <div class="td" style="left:704px;width:120px;text-align:center;top:681px">是</div>
  <div class="td" style="left:1244px;width:120px;text-align:center;top:681px">是</div>
  <div class="td" style="left:1380px;top:681px">关联的客户/供应...</div>
  <div class="a" style="left:1494px;top:225px;width:10px;height:481px;background:linear-gradient(to right,rgba(0,0,0,0),rgba(0,0,0,.045))"></div>
  <div class="a" style="left:1504px;top:225px;width:156px;height:481px;background:#fff"></div>
  <div class="a" style="left:1504px;top:225px;width:156px;height:53px;background:#fafafa;border-bottom:1px solid #f0f0f0;border-radius:0 8px 0 0"></div>
  <div class="th" style="left:1504px;width:150px;text-align:center">操作</div>
  <div class="rt" style="left:1535px;top:295px;color:#5a7cf0">编辑</div>
  <div class="a" style="left:1579px;top:299px;width:1px;height:13px;background:#ececec"></div>
  <div class="rt" style="left:1595px;top:295px;color:#d9534f">还原</div>
  <div class="a" style="left:1504px;top:332px;width:150px;height:1px;background:#f0f0f0"></div>
  <div class="rt" style="left:1535px;top:350px;color:#5a7cf0">编辑</div>
  <div class="a" style="left:1579px;top:354px;width:1px;height:13px;background:#ececec"></div>
  <div class="rt" style="left:1595px;top:350px;color:#d9534f">还原</div>
  <div class="a" style="left:1504px;top:387px;width:150px;height:1px;background:#f0f0f0"></div>
  <div class="rt" style="left:1535px;top:405px;color:#5a7cf0">编辑</div>
  <div class="a" style="left:1579px;top:409px;width:1px;height:13px;background:#ececec"></div>
  <div class="rt" style="left:1595px;top:405px;color:#d9534f">还原</div>
  <div class="a" style="left:1504px;top:442px;width:150px;height:1px;background:#f0f0f0"></div>
  <div class="rt" style="left:1535px;top:460px;color:#5a7cf0">编辑</div>
  <div class="a" style="left:1579px;top:464px;width:1px;height:13px;background:#ececec"></div>
  <div class="rt" style="left:1595px;top:460px;color:#d9534f">还原</div>
  <div class="a" style="left:1504px;top:497px;width:150px;height:1px;background:#f0f0f0"></div>
  <div class="rt" style="left:1535px;top:515px;color:#5a7cf0">编辑</div>
  <div class="a" style="left:1579px;top:519px;width:1px;height:13px;background:#ececec"></div>
  <div class="rt" style="left:1595px;top:515px;color:#d9534f">还原</div>
  <div class="a" style="left:1504px;top:552px;width:150px;height:1px;background:#f0f0f0"></div>
  <div class="rt" style="left:1535px;top:570px;color:#5a7cf0">编辑</div>
  <div class="a" style="left:1579px;top:574px;width:1px;height:13px;background:#ececec"></div>
  <div class="rt" style="left:1595px;top:570px;color:#d9534f">还原</div>
  <div class="a" style="left:1504px;top:607px;width:150px;height:1px;background:#f0f0f0"></div>
  <div class="rt" style="left:1535px;top:625px;color:#5a7cf0">编辑</div>
  <div class="a" style="left:1579px;top:629px;width:1px;height:13px;background:#ececec"></div>
  <div class="rt" style="left:1595px;top:625px;color:#d9534f">还原</div>
  <div class="a" style="left:1504px;top:662px;width:150px;height:1px;background:#f0f0f0"></div>
  <div class="rt" style="left:1535px;top:680px;color:#5a7cf0">编辑</div>
  <div class="a" style="left:1579px;top:684px;width:1px;height:13px;background:#ececec"></div>
  <div class="rt" style="left:1595px;top:680px;color:#d9534f">还原</div>
  <div class="a" style="left:1654px;top:278px;width:6px;height:428px;background:#f3f3f3;border-radius:0 0 3px 3px"></div>
  <div class="a" style="left:1654px;top:278px;width:6px;height:68px;background:#c6c6c6;border-radius:3px"></div>
  <div class="a" style="left:292px;top:706px;width:1380px;height:38px;background:#fff"></div>
  <div class="a" style="left:304px;top:706px;width:1350px;height:6px;background:#f0f0f0;border-radius:3px"></div>
  <div class="a" style="left:304px;top:706px;width:1340px;height:6px;background:#c8c8c8;border-radius:3px"></div>
<!--C2E-->
</div>
<div class="a" style="left:200px;top:64px;width:1px;height:823px;background:#fff"></div>
<div id="foot" class="a">
  <div class="t" style="left:0;top:1px;width:1720px;text-align:center;font-size:12px;color:#555">Skyeye云 | Copyright © 2018~2024 | author：卫志强 | 开源版地址：<span style="color:#557af0">skyeye</span></div>
</div>
</body>
</html>
